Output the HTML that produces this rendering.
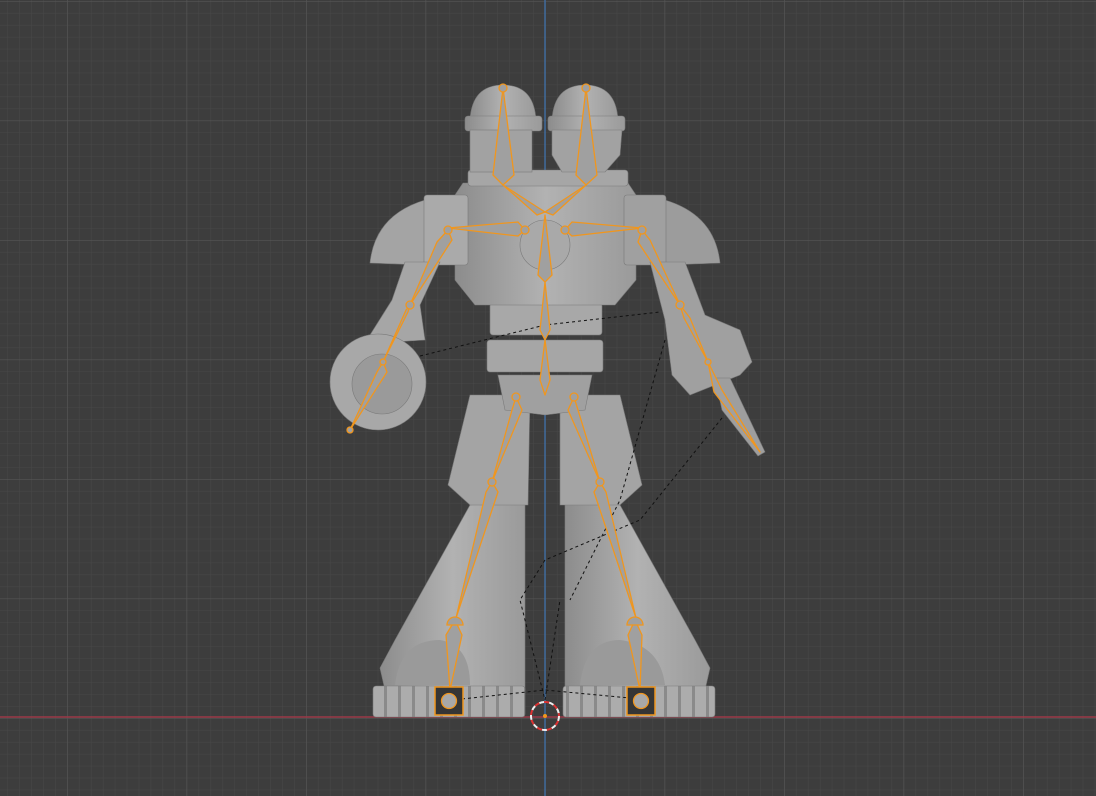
<!DOCTYPE html><html><head><style>html,body{margin:0;padding:0;background:#3d3d3d;overflow:hidden}svg{display:block}</style></head><body>
<svg width="1096" height="796" viewBox="0 0 1096 796" xmlns="http://www.w3.org/2000/svg">
<defs>
<pattern id="mn" width="11.95" height="11.95" patternUnits="userSpaceOnUse" x="67" y="1"><path d="M0 0H12M0 0V12" stroke="#484848" stroke-width="1" fill="none"/></pattern>
<pattern id="mj" width="119.5" height="119.5" patternUnits="userSpaceOnUse" x="67" y="1"><path d="M0 0H120M0 0V120" stroke="#555" stroke-width="1.3" fill="none"/></pattern>
<pattern id="rib" width="14" height="40" patternUnits="userSpaceOnUse" x="373" y="0"><rect width="14" height="40" fill="#acacac"/><rect x="11" width="3" height="40" fill="#8a8a8a"/></pattern>
<linearGradient id="g" x1="0" y1="0" x2="1" y2="0"><stop offset="0" stop-color="#8c8c8c"/><stop offset=".5" stop-color="#b2b2b2"/><stop offset="1" stop-color="#9a9a9a"/></linearGradient>
</defs>
<rect width="1096" height="796" fill="#3d3d3d"/>
<rect width="1096" height="796" fill="url(#mn)"/>
<rect width="1096" height="796" fill="url(#mj)"/>
<line x1="545" y1="0" x2="545" y2="796" stroke="#3f6a9c" stroke-width="1.5"/>
<line x1="0" y1="717" x2="1096" y2="717" stroke="#9c3a48" stroke-width="1.5"/>
<g fill="url(#g)" stroke="#7a7a7a" stroke-width="0.6">
<path d="M525 500 L470 505 L395 640 L380 668 L385 690 L525 690 Z"/>
<path d="M565 500 L620 505 L695 640 L710 668 L705 690 L565 690 Z"/>
<path d="M470 395 L530 395 L528 505 L470 505 L448 485 Z" fill="#a4a4a4"/>
<path d="M560 395 L620 395 L642 485 L620 505 L560 505 Z" fill="#a4a4a4"/>
<path d="M498 375 L592 375 L585 410 L545 415 L505 410 Z" fill="#a0a0a0"/>
<path d="M395 685 Q400 640 440 640 Q470 645 470 685 Z" fill="#9a9a9a" stroke="none"/>
<path d="M580 685 Q585 640 620 640 Q660 645 665 685 Z" fill="#9a9a9a" stroke="none"/>
<rect x="373" y="686" width="152" height="31" rx="3" fill="url(#rib)"/>
<rect x="563" y="686" width="152" height="31" rx="3" fill="url(#rib)"/>
<rect x="487" y="340" width="116" height="32" rx="3" fill="#a6a6a6"/>
<rect x="490" y="303" width="112" height="32" rx="3" fill="#a8a8a8"/>
<path d="M455 195 L463 183 L628 183 L636 195 L636 280 L615 305 L475 305 L455 280 Z"/>
<circle cx="545" cy="245" r="25" fill="#a9a9a9"/>
<path d="M370 263 Q375 215 425 200 L425 265 Z" fill="#a4a4a4"/>
<path d="M720 263 Q715 215 665 200 L665 265 Z" fill="#9c9c9c"/>
<rect x="424" y="195" width="44" height="70" rx="3" fill="#aaaaaa"/>
<rect x="624" y="195" width="42" height="70" rx="3" fill="#a0a0a0"/>
<path d="M405 262 L440 262 L420 305 L425 340 L392 342 L370 335 L392 300 Z" fill="#a6a6a6"/>
<circle cx="378" cy="382" r="48" fill="#a8a8a8"/>
<circle cx="382" cy="384" r="30" fill="#9a9a9a"/>
<path d="M650 262 L685 262 L705 315 L740 330 L752 362 L740 375 L690 395 L672 375 L665 320 Z" fill="#a0a0a0"/>
<path d="M715 378 L730 378 L765 452 L758 456 L722 410 Z" fill="#9e9e9e"/>
<rect x="468" y="170" width="160" height="16" rx="3" fill="#a6a6a6"/>
<path d="M470 120 Q472 85 503 85 Q534 85 536 120 Z"/>
<rect x="465" y="116" width="77" height="15" rx="3"/>
<rect x="470" y="130" width="62" height="42" fill="#a2a2a2"/>
<path d="M552 120 Q554 85 585 85 Q616 85 618 120 Z"/>
<rect x="548" y="116" width="77" height="15" rx="3"/>
<path d="M552 130 L622 130 L620 155 L605 172 L562 172 L552 155 Z" fill="#a2a2a2"/>
</g>
<g stroke="#111" stroke-width="1" stroke-dasharray="3,3" fill="none">
<path d="M420 356 L545 325 L660 312"/>
<path d="M722 418 L640 520 L545 560 L520 600 L545 700"/>
<path d="M665 340 L620 500 L570 600"/>
<path d="M462 699 L545 690 L640 699"/>
<path d="M545 700 L560 600"/>
</g>
<g fill="#a0a0a0" stroke="#f0961e" stroke-width="1.3" stroke-linejoin="round">
<path d="M503 88 L514 175 L503 185 L493 175 Z"/>
<path d="M586 88 L597 175 L586 185 L576 175 Z"/>
<path d="M503 185 L545 212 L537 215 Z"/>
<path d="M586 185 L545 212 L553 215 Z"/>
<path d="M545 215 L552 275 L545 282 L538 275 Z"/>
<path d="M545 282 L550 330 L545 340 L540 330 Z"/>
<path d="M545 340 L550 380 L545 395 L540 380 Z"/>
<path d="M448 228 L518 222 L525 230 L518 236 Z"/>
<path d="M642 228 L572 222 L565 230 L572 236 Z"/>
<path d="M448 230 L452 240 L410 305 L437 242 Z"/>
<path d="M642 230 L650 240 L680 305 L638 242 Z"/>
<path d="M410 305 L408 312 L383 362 L406 310 Z"/>
<path d="M680 305 L690 318 L708 362 L684 318 Z"/>
<path d="M383 362 L387 372 L350 430 L377 372 Z"/>
<path d="M708 362 L722 390 L760 452 L714 392 Z"/>
<path d="M516 397 L522 410 L492 482 L512 410 Z"/>
<path d="M574 397 L578 410 L600 482 L568 410 Z"/>
<path d="M492 482 L498 492 L456 618 L486 492 Z"/>
<path d="M600 482 L606 492 L636 618 L594 492 Z"/>
<path d="M455 620 L462 635 L450 690 L446 635 Z"/>
<path d="M635 620 L642 635 L640 690 L628 635 Z"/>
</g>
<g fill="#a0a0a0" stroke="#f0961e" stroke-width="1.3">
<circle cx="503" cy="88" r="4"/><circle cx="586" cy="88" r="4"/>
<circle cx="448" cy="230" r="4"/><circle cx="642" cy="230" r="4"/>
<circle cx="525" cy="230" r="4"/><circle cx="565" cy="230" r="4"/>
<circle cx="410" cy="305" r="4"/><circle cx="680" cy="305" r="4"/>
<circle cx="383" cy="362" r="3"/><circle cx="708" cy="362" r="3"/>
<circle cx="350" cy="430" r="3"/>
<circle cx="516" cy="397" r="4"/><circle cx="574" cy="397" r="4"/>
<circle cx="492" cy="482" r="4"/><circle cx="600" cy="482" r="4"/>
<path d="M447 625 A8 8 0 0 1 463 625 Z"/><path d="M627 625 A8 8 0 0 1 643 625 Z"/>
</g>
<rect x="435" y="687" width="28" height="28" fill="#353535" stroke="#f0961e" stroke-width="1.5"/>
<circle cx="449" cy="701" r="7.5" fill="#a8a8a8" stroke="#f0961e" stroke-width="1.3"/>
<rect x="627" y="687" width="28" height="28" fill="#353535" stroke="#f0961e" stroke-width="1.5"/>
<circle cx="641" cy="701" r="7.5" fill="#a8a8a8" stroke="#f0961e" stroke-width="1.3"/>
<circle cx="545" cy="716" r="14" fill="none" stroke="#eee" stroke-width="2" stroke-dasharray="5,5"/>
<circle cx="545" cy="716" r="14" fill="none" stroke="#d33" stroke-width="2" stroke-dasharray="5,5" stroke-dashoffset="5"/>
<circle cx="545" cy="716" r="2" fill="#f0961e"/>
</svg>
</body></html>
